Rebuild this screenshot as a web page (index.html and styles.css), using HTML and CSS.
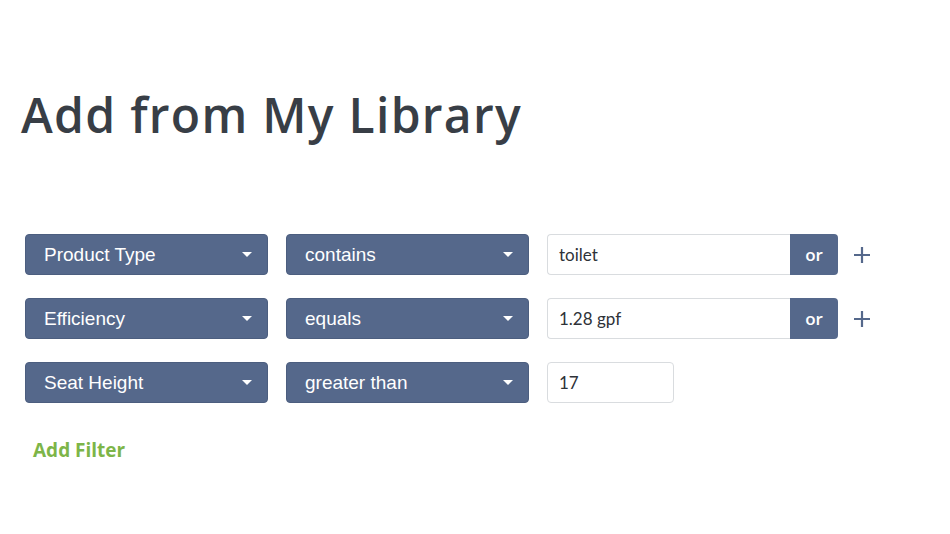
FILE: index.html
```html
<!DOCTYPE html>
<html lang="en">
<head>
    <meta charset="UTF-8">
    <title>Add from My Library</title>
    <link rel="stylesheet" href="styles.css">
</head>
<body>
    <div class="page">
        <h1>Add from My Library</h1>
        <div class="filters">
            <div class="row">
                <div class="select">Product Type<span class="caret"></span></div>
                <div class="select">contains<span class="caret"></span></div>
                <div class="group">
                    <div class="input wide">toilet</div>
                    <button class="or">or</button>
                </div>
                <svg class="plus" width="18" height="18" viewBox="0 0 18 18"><path d="M9 1v16M1 9h16" stroke="#55688b" stroke-width="2.2"/></svg>
            </div>
            <div class="row">
                <div class="select">Efficiency<span class="caret"></span></div>
                <div class="select">equals<span class="caret"></span></div>
                <div class="group">
                    <div class="input wide">1.28 gpf</div>
                    <button class="or">or</button>
                </div>
                <svg class="plus" width="18" height="18" viewBox="0 0 18 18"><path d="M9 1v16M1 9h16" stroke="#55688b" stroke-width="2.2"/></svg>
            </div>
            <div class="row">
                <div class="select">Seat Height<span class="caret"></span></div>
                <div class="select">greater than<span class="caret"></span></div>
                <div class="input short">17</div>
            </div>
        </div>
        <a class="add" href="#">Add Filter</a>
    </div>
</body>
</html>
```

FILE: styles.css
```css
body {
    margin: 0;
    background: #fff;
}
.page {
    padding: 82px 0 0 25px;
}
h1 {
    margin: 0 0 0 -4px;
    font-family: "Open Sans", sans-serif;
    font-weight: 600;
    font-size: 48px;
    letter-spacing: 1.3px;
    color: #383e46;
    line-height: 66px;
}
.filters {
    margin-top: 86px;
    display: flex;
    flex-direction: column;
    gap: 23px;
}
.row {
    display: flex;
    align-items: center;
    height: 41px;
}
.select {
    box-sizing: border-box;
    width: 243px;
    height: 41px;
    margin-right: 18px;
    padding: 0 18px;
    display: flex;
    align-items: center;
    justify-content: space-between;
    background: #55688b;
    border: 1px solid #4c5e7f;
    border-radius: 4px;
    color: #fff;
    font-family: "Liberation Sans", Arial, sans-serif;
    font-size: 19px;
}
.caret {
    width: 0;
    height: 0;
    border-left: 5px solid transparent;
    border-right: 5px solid transparent;
    border-top: 5px solid #fff;
    margin-right: -3px;
}
.group {
    display: flex;
    height: 41px;
}
.input {
    box-sizing: border-box;
    height: 41px;
    padding: 0 11px;
    display: flex;
    align-items: center;
    border: 1px solid #d9dcdf;
    border-radius: 4px;
    color: #2e3238;
    font-family: "Lato", sans-serif;
    font-size: 17px;
    background: #fff;
}
.input.wide {
    width: 243px;
    border-radius: 4px 0 0 4px;
    border-right: none;
}
.input.short {
    width: 127px;
}
.or {
    width: 48px;
    height: 41px;
    border: none;
    border-radius: 0 4px 4px 0;
    background: #55688b;
    color: #fff;
    font-family: "Open Sans", sans-serif;
    font-weight: 600;
    font-size: 17px;
    padding: 0;
}
.plus {
    margin-left: 15px;
}
.add {
    display: inline-block;
    margin: 34px 0 0 8px;
    color: #7db548;
    font-family: "Open Sans", sans-serif;
    font-weight: 700;
    font-size: 19px;
    text-decoration: none;
}
```
